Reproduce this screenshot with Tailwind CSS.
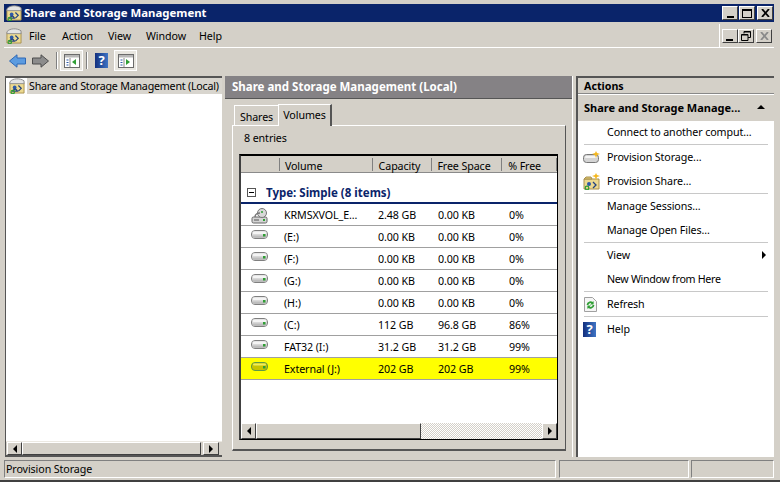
<!DOCTYPE html>
<html lang="en">
<head>
  <meta charset="UTF-8">
  <title>Share and Storage Management</title>
  <script src="https://cdn.jsdelivr.net/npm/@tailwindcss/browser@4"></script>
</head>
<body class="w-[780px] h-[482px] overflow-hidden bg-[#d4d0c8] text-[10.7px] tracking-[-0.1px] leading-none text-black font-['Noto_Sans',sans-serif]">
  <!-- shared icons -->
  <svg class="hidden">
    <symbol id="drive" viewBox="0 0 17 11">
      <rect x="0.5" y="1.5" width="16" height="8" rx="3.5" fill="#d8d8d8" stroke="#7f7f7f"/>
      <rect x="1.5" y="2.5" width="14" height="2.5" rx="1.2" fill="#f4f4f4"/>
      <rect x="1.5" y="6.5" width="14" height="2.5" rx="1" fill="#bdbdbd"/>
      <rect x="12" y="5" width="2.5" height="2.5" fill="#2f9e34"/>
    </symbol>
    <symbol id="share" viewBox="0 0 17 17">
      <path d="M1 5h15v11H1z" fill="#ecd98f" stroke="#a89150"/>
      <path d="M1 4c3-4 11-4 15-1v3H1z" fill="#e4e4e4" stroke="#8d8d8d"/>
      <circle cx="6" cy="10" r="2" fill="#2d5aa8"/>
      <path d="M4 14c1-3 4-3 5 0zM10 8l3 3-3 3" fill="none" stroke="#23427f" stroke-width="1.3"/>
      <circle cx="4" cy="15" r="1.8" fill="none" stroke="#2f9e34" stroke-width="1.2"/>
    </symbol>
    <symbol id="panel" viewBox="0 0 16 14">
      <rect x="0.5" y="0.5" width="15" height="13" fill="#fff" stroke="#6b6b6b"/>
      <rect x="1" y="1" width="14" height="2.5" fill="#b8b8b8"/>
      <path d="M2.5 5.5h2v1h-2zM2.5 8h2v1h-2zM2.5 10.500h2v1h-2z" fill="#2d5aa8"/>
      <path d="M6 4v9" stroke="#8a8a8a"/>
    </symbol>
  </svg>

  <div class="flex flex-col h-full pt-1 pl-1 pr-1 border-b-2 border-[#404040]">
    <!-- title bar -->
    <div class="h-[18px] w-[770px] shrink-0 bg-[#0a246a] flex items-center pl-[2px] pr-[1px]">
      <svg class="w-4 h-4"><use href="#share"/></svg>
      <span class="ml-[2px] text-white font-bold text-[11.4px] tracking-normal">Share and Storage Management</span>
      <div class="ml-auto flex items-center">
        <button class="w-[16px] h-[14px] bg-[#d4d0c8] border border-t-white border-l-white border-r-[#404040] border-b-[#404040] relative"><span class="absolute left-[4px] bottom-[1px] w-[7px] h-[2px] bg-black"></span></button>
        <button class="w-[16px] h-[14px] ml-px bg-[#d4d0c8] border border-t-white border-l-white border-r-[#404040] border-b-[#404040] flex items-center justify-center"><span class="w-[10px] h-[9px] border border-t-2 border-black"></span></button>
        <button class="w-[16px] h-[14px] ml-[2px] bg-[#d4d0c8] border border-t-white border-l-white border-r-[#404040] border-b-[#404040] flex items-center justify-center">
          <svg class="w-[9px] h-[8px]" viewBox="0 0 9 8"><path d="M1 0l7 8M8 0l-7 8" stroke="#000" stroke-width="1.8"/></svg>
        </button>
      </div>
    </div>

    <!-- menu bar -->
    <div class="mt-[2px] h-[24px] w-[770px] shrink-0 flex items-center border-b border-white">
      <svg class="w-4 h-4 ml-[2px]"><use href="#share"/></svg>
      <span class="absolute left-[29px] mt-px">File</span>
      <span class="absolute left-[62px] mt-px">Action</span>
      <span class="absolute left-[108px] mt-px">View</span>
      <span class="absolute left-[146px] mt-px">Window</span>
      <span class="absolute left-[199px] mt-px">Help</span>
      <div class="ml-auto h-full flex items-center border-l border-white pl-[2px] pr-[2px]">
        <button class="w-[16px] h-[14px] bg-[#d4d0c8] border border-t-white border-l-white border-r-[#404040] border-b-[#404040] relative"><span class="absolute left-[3px] bottom-[1px] w-[7px] h-[2px] bg-black"></span></button>
        <button class="w-[16px] h-[14px] bg-[#d4d0c8] border border-t-white border-l-white border-r-[#404040] border-b-[#404040] flex items-center justify-center">
          <svg class="w-[10px] h-[10px]" viewBox="0 0 10 10"><path d="M3 2.500V.5h6.500v6H7M.5 3.500h6.500v6H.5z" fill="none" stroke="#000"/><path d="M3 1h6.500M.5 4h6.500" stroke="#000"/></svg>
        </button>
        <button class="w-[16px] h-[14px] ml-[2px] bg-[#d4d0c8] border border-t-white border-l-white border-r-[#404040] border-b-[#404040] flex items-center justify-center">
          <svg class="w-[9px] h-[8px]" viewBox="0 0 9 8"><path d="M1 0l7 8M8 0l-7 8" stroke="#8a8a8a" stroke-width="1.8"/></svg>
        </button>
      </div>
    </div>

    <!-- toolbar -->
    <div class="h-[25px] w-[770px] shrink-0 flex items-center pl-[5px]">
      <svg class="w-[17px] h-[14px]" viewBox="0 0 17 14"><path d="M.5 7L8 .8v3.200h8.500v6H8v3.200z" fill="#5b9be0" stroke="#2f68b5"/></svg>
      <svg class="w-[17px] h-[14px] ml-[6px]" viewBox="0 0 17 14"><path d="M16.500 7L9 .8v3.200H.5v6H9v3.200z" fill="#8c8c8c" stroke="#4d4d4d"/></svg>
      <div class="w-[2px] h-[17px] ml-[7px] border-l border-[#808080] bg-white"></div>
      <div class="w-[23px] h-[21px] ml-[2px] border border-white bg-[#e8e6e0] flex items-center justify-center">
        <svg class="w-4 h-[14px]" viewBox="0 0 16 14"><use href="#panel"/><path d="M12 5v6L8 8z" fill="#2f9e34"/></svg>
      </div>
      <div class="w-[2px] h-[17px] ml-[3px] border-l border-[#808080] bg-white"></div>
      <div class="w-[13px] h-[15px] ml-[7px] bg-linear-to-r from-[#14307f] to-[#3f74c4] text-white font-bold text-[13px] flex items-center justify-center">?</div>
      <div class="w-[23px] h-[21px] ml-[6px] border border-white bg-[#e8e6e0] flex items-center justify-center">
        <svg class="w-4 h-[14px]" viewBox="0 0 16 14"><use href="#panel"/><path d="M8 5v6l4-3z" fill="#2f9e34"/></svg>
      </div>
    </div>

    <!-- the three panes -->
    <div class="h-[381px] w-[770px] shrink-0 mt-[3px] flex">
      <!-- tree pane -->
      <div class="w-[217px] ml-px shrink-0 flex flex-col border-t-2 border-l border-[#555] bg-white">
        <div class="flex-1">
          <div class="flex items-center h-[16px]">
            <svg class="w-4 h-4 ml-[3px] shrink-0"><use href="#share"/></svg>
            <span class="ml-[2px] pl-[2px] flex-1 h-full flex items-center whitespace-nowrap tracking-[-0.22px] bg-[#d8d5ce]">Share and Storage Management (Local)</span>
          </div>
        </div>
        <div class="h-[16px] flex bg-[#d4d0c8] border-t border-[#ece9e2] border-b-2 border-b-[#555]">
          <button class="w-[15px] ml-px bg-[#d4d0c8] border border-t-white border-l-white border-r-[#404040] border-b-[#404040] flex items-center justify-center"><span class="w-0 h-0 border-y-4 border-y-transparent border-r-4 border-r-black"></span></button>
          <div class="w-[179px] border border-t-white border-l-white border-r-[#404040] border-b-[#404040]"></div>
          <div class="w-[2px]"></div>
          <button class="w-[16px] bg-[#d4d0c8] border border-t-white border-l-white border-r-[#404040] border-b-[#404040] flex items-center justify-center"><span class="w-0 h-0 border-y-4 border-y-transparent border-l-4 border-l-black"></span></button>
        </div>
      </div>

      <!-- middle pane -->
      <div class="w-[348px] ml-[3px] shrink-0 flex flex-col border-r border-white">
        <div class="h-[23px] shrink-0 bg-[#858285] text-white font-bold text-[11.5px] tracking-normal flex items-center pl-[7px] border-b border-[#555]">Share and Storage Management (Local)</div>
        <div class="flex-1 flex flex-col pl-[7px] pr-[6px] pb-[6px]">
          <!-- tabs -->
          <div class="h-[26px] shrink-0 flex items-end pl-[2px]">
            <div class="w-[44px] h-[20px] pt-[3px] flex items-center justify-center border-t border-l border-white">Shares</div>
            <div class="w-[54px] h-[22px] flex items-center justify-center border-t border-l border-white border-r-2 border-r-[#555] relative top-px z-10 bg-[#d4d0c8]">Volumes</div>
          </div>
          <!-- tab page -->
          <div class="flex-1 flex flex-col border border-t-white border-l-white border-r-[#555] border-b-[#555] border-b-2 pl-[6px] pr-[7px]">
            <div class="h-[28px] shrink-0 flex items-center pl-[5px] pb-1">8 entries</div>
            <!-- list -->
            <div class="h-[286px] flex flex-col bg-white border border-black border-t-2 border-l-2 border-l-[#404040] relative">
              <div class="h-[17px] shrink-0 flex items-center bg-[#d4d0c8] border-b border-[#8a8a8a]">
                <div class="w-[39px] h-[13px] border-r border-[#808080]"></div>
                <div class="w-[93px] h-[13px] pl-[5px] pt-1 border-r border-[#808080] flex items-center">Volume</div>
                <div class="w-[60px] h-[13px] pl-[6px] pt-1 border-r border-[#808080] flex items-center">Capacity</div>
                <div class="w-[70px] h-[13px] pl-[5px] pt-1 border-r border-[#808080] flex items-center">Free Space</div>
                <div class="w-[55px] h-[13px] pl-[6px] pt-1 border-r border-[#808080] flex items-center">% Free</div>
              </div>
              <div class="h-[31px] shrink-0 flex items-center border-b-2 border-[#0a246a] pt-[10px]">
                <span class="ml-[6px] w-[9px] h-[9px] border border-[#555] relative"><span class="absolute left-px right-px top-[3px] h-px bg-black"></span></span>
                <span class="ml-[10px] font-bold text-[#0a246a] text-[11.5px] tracking-normal">Type: Simple (8 items)</span>
              </div>
              <div class="h-[22px] shrink-0 flex items-center border-b border-[#a0a0a0] pt-px">
                <div class="w-[39px] pl-[10px]">
                  <svg class="w-[17px] h-[17px]" viewBox="0 0 17 17">
                    <rect x="1" y="10" width="15" height="6" rx="1.500" fill="#d4d4d4" stroke="#666"/>
                    <circle cx="11" cy="6" r="4.500" fill="#d8d8d8" stroke="#777"/>
                    <path d="M4 10c0-3 3-4 5-4" fill="none" stroke="#777" stroke-width="1.500"/>
                    <circle cx="11" cy="5" r="1" fill="#2f9e34"/>
                    <path d="M3 13h5" stroke="#555"/><rect x="12" y="12" width="2" height="2" fill="#2f9e34"/>
                  </svg>
                </div>
                <div class="w-[94px] pl-1">KRMSXVOL_E...</div><div class="w-[60px] pl-1">2.48 GB</div><div class="w-[70px] pl-1">0.00 KB</div><div class="pl-[5px]">0%</div>
              </div>
              <div class="h-[22px] shrink-0 flex items-center border-b border-[#a0a0a0] pt-px">
                <div class="w-[39px] pl-[10px] pb-[5px]"><svg class="block w-[17px] h-[11px]"><use href="#drive"/></svg></div>
                <div class="w-[94px] pl-1">(E:)</div><div class="w-[60px] pl-1">0.00 KB</div><div class="w-[70px] pl-1">0.00 KB</div><div class="pl-[5px]">0%</div>
              </div>
              <div class="h-[22px] shrink-0 flex items-center border-b border-[#a0a0a0] pt-px">
                <div class="w-[39px] pl-[10px] pb-[5px]"><svg class="block w-[17px] h-[11px]"><use href="#drive"/></svg></div>
                <div class="w-[94px] pl-1">(F:)</div><div class="w-[60px] pl-1">0.00 KB</div><div class="w-[70px] pl-1">0.00 KB</div><div class="pl-[5px]">0%</div>
              </div>
              <div class="h-[22px] shrink-0 flex items-center border-b border-[#a0a0a0] pt-px">
                <div class="w-[39px] pl-[10px] pb-[5px]"><svg class="block w-[17px] h-[11px]"><use href="#drive"/></svg></div>
                <div class="w-[94px] pl-1">(G:)</div><div class="w-[60px] pl-1">0.00 KB</div><div class="w-[70px] pl-1">0.00 KB</div><div class="pl-[5px]">0%</div>
              </div>
              <div class="h-[22px] shrink-0 flex items-center border-b border-[#a0a0a0] pt-px">
                <div class="w-[39px] pl-[10px] pb-[5px]"><svg class="block w-[17px] h-[11px]"><use href="#drive"/></svg></div>
                <div class="w-[94px] pl-1">(H:)</div><div class="w-[60px] pl-1">0.00 KB</div><div class="w-[70px] pl-1">0.00 KB</div><div class="pl-[5px]">0%</div>
              </div>
              <div class="h-[22px] shrink-0 flex items-center border-b border-[#a0a0a0] pt-px">
                <div class="w-[39px] pl-[10px] pb-[5px]"><svg class="block w-[17px] h-[11px]"><use href="#drive"/></svg></div>
                <div class="w-[94px] pl-1">(C:)</div><div class="w-[60px] pl-1">112 GB</div><div class="w-[70px] pl-1">96.8 GB</div><div class="pl-[5px]">86%</div>
              </div>
              <div class="h-[22px] shrink-0 flex items-center border-b border-[#a0a0a0] pt-px">
                <div class="w-[39px] pl-[10px] pb-[5px]"><svg class="block w-[17px] h-[11px]"><use href="#drive"/></svg></div>
                <div class="w-[94px] pl-1">FAT32 (I:)</div><div class="w-[60px] pl-1">31.2 GB</div><div class="w-[70px] pl-1">31.2 GB</div><div class="pl-[5px]">99%</div>
              </div>
              <div class="h-[22px] shrink-0 flex items-center bg-[#ffff00] border-b border-[#a0a0a0] pt-px">
                <div class="w-[39px] pl-[10px] pb-[5px]">
                  <svg class="block w-[17px] h-[11px]" viewBox="0 0 17 11"><rect x="0.5" y="1.500" width="16" height="8" rx="3.500" fill="#c9c400" stroke="#5f9a45"/><rect x="2" y="2.500" width="13" height="2" rx="1" fill="#efec60"/><rect x="12" y="5" width="2.500" height="2.500" fill="#2f9e34"/></svg>
                </div>
                <div class="w-[94px] pl-1">External (J:)</div><div class="w-[60px] pl-1">202 GB</div><div class="w-[70px] pl-1">202 GB</div><div class="pl-[5px]">99%</div>
              </div>
              <div class="flex-1"></div>
              <div class="h-[16px] shrink-0 flex bg-[repeating-conic-gradient(#d4d0c8_0_25%,#fff_0_50%)] bg-[length:2px_2px]">
                <button class="w-[15px] bg-[#d4d0c8] border border-t-white border-l-white border-r-[#404040] border-b-[#404040] flex items-center justify-center"><span class="w-0 h-0 border-y-4 border-y-transparent border-r-4 border-r-black"></span></button>
                <div class="w-[165px] bg-[#d4d0c8] border border-t-white border-l-white border-r-[#404040] border-b-[#404040]"></div>
                <button class="ml-auto w-[15px] bg-[#d4d0c8] border border-t-white border-l-white border-r-[#404040] border-b-[#404040] flex items-center justify-center"><span class="w-0 h-0 border-y-4 border-y-transparent border-l-4 border-l-black"></span></button>
              </div>
            </div>
          </div>
        </div>
      </div>

      <!-- actions pane -->
      <div class="w-[198px] ml-[3px] shrink-0 flex flex-col border-l-2 border-t-2 border-[#555]">
        <div class="h-[16px] pt-[2px] shrink-0 flex items-center pl-[6px] font-bold tracking-normal border-b border-[#888]">Actions</div>
        <div class="flex-1 flex flex-col border-t border-white bg-white">
          <div class="h-[26px] shrink-0 bg-[#d4d0c8] flex items-center pl-[6px] pr-[9px] pb-[2px] font-bold text-[11px] tracking-normal">
            <span>Share and Storage Manage...</span>
            <span class="ml-auto w-0 h-0 border-x-[4px] border-x-transparent border-b-[4px] border-b-black"></span>
          </div>
          <div class="h-[23px] shrink-0 flex items-center pl-[29px]">Connect to another comput...</div>
          <div class="h-px mx-[6px] shrink-0 bg-[#c8c8c8]"></div>
          <div class="h-6 shrink-0 flex items-center pl-[5px]">
            <svg class="w-[17px] h-[13px]" viewBox="0 0 17 13"><rect x="0.500" y="3.500" width="15" height="8" rx="3" fill="#d4d4d4" stroke="#777"/><rect x="2" y="5" width="12" height="2" rx="1" fill="#f4f4f4"/><path d="M13 0l1 2 3 1-3 1-1 3-1-3-3-1 3-1z" fill="#f6b81d"/></svg>
            <span class="ml-[7px]">Provision Storage...</span>
          </div>
          <div class="h-6 shrink-0 flex items-center pl-[5px]">
            <svg class="w-[17px] h-[17px]" viewBox="0 0 17 17"><path d="M1 6h15v10H1z" fill="#ecd98f" stroke="#a89150"/><path d="M1 6l2-2h5l1 2z" fill="#e0c870" stroke="#a89150"/><circle cx="6" cy="11" r="2" fill="#2d5aa8"/><path d="M10 9l3 3-3 3" fill="none" stroke="#23427f" stroke-width="1.3"/><circle cx="4" cy="15" r="1.8" fill="none" stroke="#2f9e34" stroke-width="1.2"/><path d="M13 0l1 2 3 1-3 1-1 3-1-3-3-1 3-1z" fill="#f6b81d"/></svg>
            <span class="ml-[7px]">Provision Share...</span>
          </div>
          <div class="h-px mx-[6px] shrink-0 bg-[#c8c8c8]"></div>
          <div class="h-6 shrink-0 flex items-center pl-[29px]">Manage Sessions...</div>
          <div class="h-6 shrink-0 flex items-center pl-[29px]">Manage Open Files...</div>
          <div class="h-px mx-[6px] shrink-0 bg-[#c8c8c8]"></div>
          <div class="h-6 shrink-0 flex items-center pl-[29px] pr-[8px]"><span>View</span><span class="ml-auto w-0 h-0 border-y-4 border-y-transparent border-l-4 border-l-black"></span></div>
          <div class="h-6 shrink-0 flex items-center pl-[29px] tracking-[-0.3px]">New Window from Here</div>
          <div class="h-px mx-[6px] shrink-0 bg-[#c8c8c8]"></div>
          <div class="h-6 shrink-0 flex items-center pl-[6px]">
            <svg class="w-[13px] h-[15px]" viewBox="0 0 13 15"><path d="M.5.500h8l4 4v10H.5z" fill="#f5f5f5" stroke="#a0a0a0"/><path d="M3.500 8a3 3 0 0 1 5.500-1.500M9.500 8a3 3 0 0 1-5.500 1.500" fill="none" stroke="#2f9e34" stroke-width="1.800"/><path d="M9.500 4v3.500H6zM3.500 12V8.500H7z" fill="#2f9e34"/></svg>
            <span class="ml-[10px]">Refresh</span>
          </div>
          <div class="h-px mx-[6px] shrink-0 bg-[#c8c8c8]"></div>
          <div class="h-6 shrink-0 flex items-center pl-[5px]">
            <div class="w-[13px] h-[15px] bg-linear-to-r from-[#14307f] to-[#3f74c4] text-white font-bold text-[13px] flex items-center justify-center">?</div>
            <span class="ml-[11px]">Help</span>
          </div>
        </div>
      </div>
    </div>

    <!-- status bar -->
    <div class="mt-[3px] h-[18px] w-[770px] shrink-0 flex">
      <div class="w-[552px] border border-t-[#808080] border-l-[#808080] border-r-white border-b-white flex items-center pl-px">Provision Storage</div>
      <div class="w-[130px] ml-[3px] border border-t-[#808080] border-l-[#808080] border-r-white border-b-white"></div>
      <div class="w-[83px] ml-[2px] border border-t-[#808080] border-l-[#808080] border-r-white border-b-white"></div>
    </div>
  </div>
</body>
</html>
